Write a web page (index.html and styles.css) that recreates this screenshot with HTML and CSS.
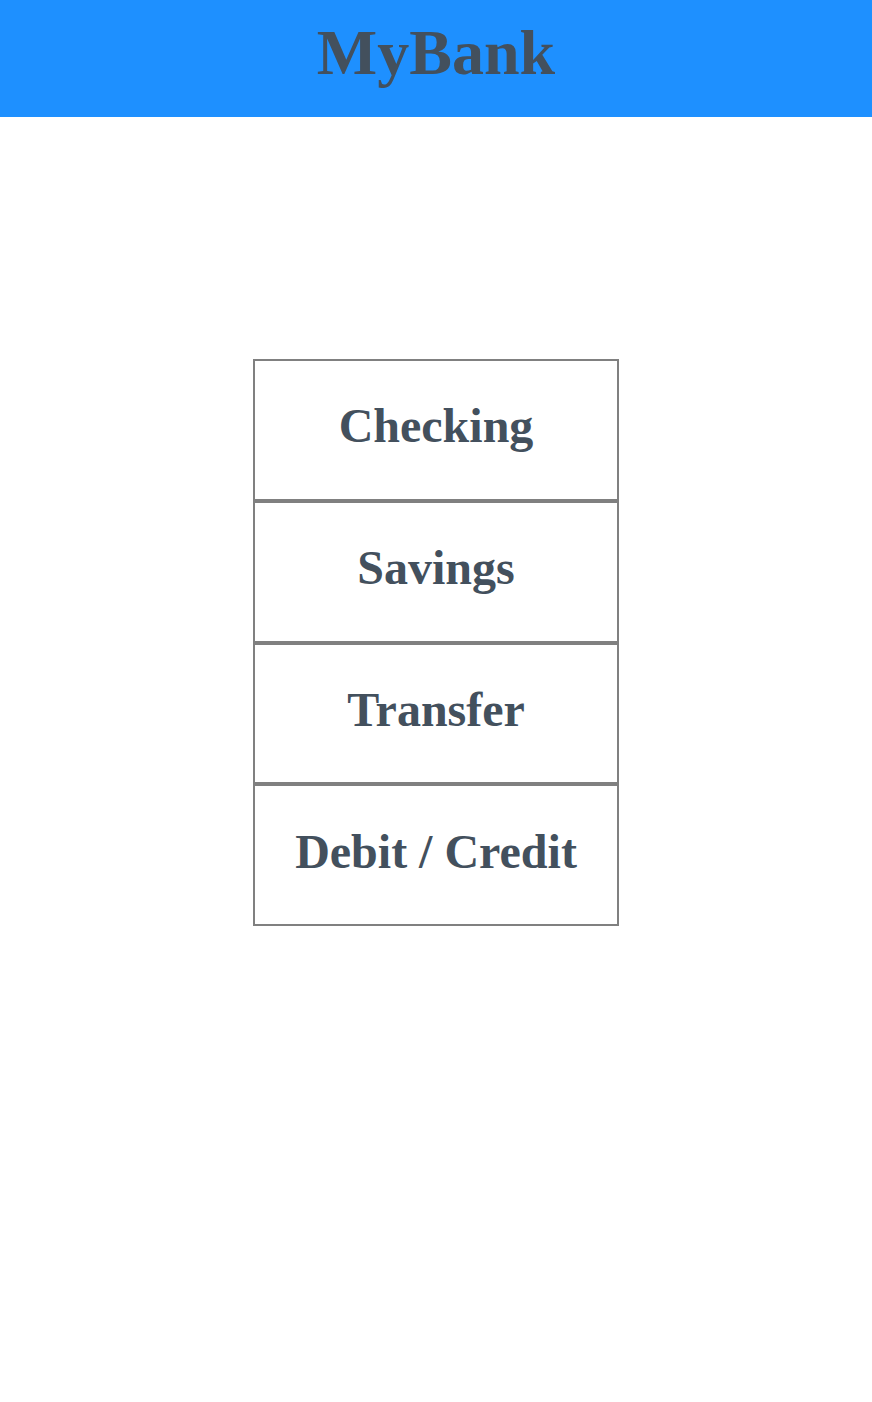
FILE: index.html
```html
<!DOCTYPE html>
<html>
<head>
<meta charset="utf-8">
<title>MyBank</title>
<link rel="stylesheet" href="styles.css">
</head>
<body>
<header class="site-header">
  <h1 class="brand">MyBank</h1>
</header>
<main class="menu">
  <div class="menu-item">Checking</div>
  <div class="menu-item">Savings</div>
  <div class="menu-item">Transfer</div>
  <div class="menu-item">Debit / Credit</div>
</main>
</body>
</html>
```

FILE: styles.css
```css
html, body {
  margin: 0;
  padding: 0;
  background: #ffffff;
}

body {
  font-family: "Liberation Serif", "Times New Roman", serif;
  color: #43505d;
}

.site-header {
  box-sizing: border-box;
  height: 117px;
  background: #1e90ff;
  padding-top: 16px;
  text-align: center;
}

.brand {
  margin: 0;
  font-size: 64px;
  font-weight: bold;
  line-height: normal;
  color: #43505d;
}

.menu {
  width: 366px;
  margin: 242px auto 0;
  display: flex;
  flex-direction: column;
}

.menu-item {
  box-sizing: border-box;
  height: 141.75px;
  padding-bottom: 8px;
  border: 2px solid #808080;
  display: flex;
  align-items: center;
  justify-content: center;
  font-size: 48px;
  font-weight: bold;
}
```
